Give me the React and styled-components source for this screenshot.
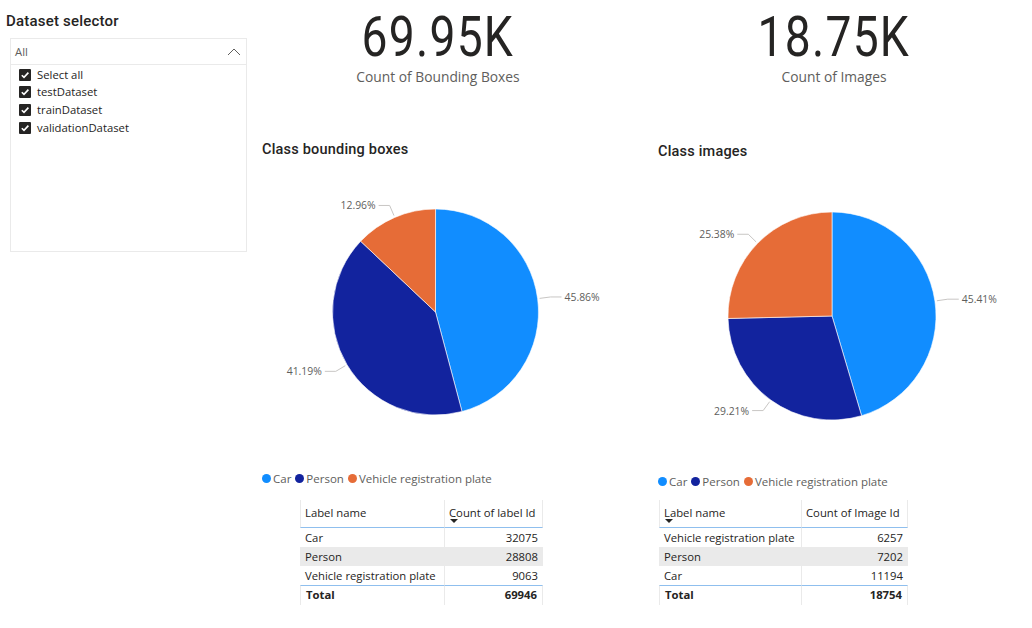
import React from "react";
import styled, { createGlobalStyle } from "styled-components";

const GlobalStyle = createGlobalStyle`
  html, body {
    margin: 0;
    padding: 0;
    background: #fff;
    font-family: "Open Sans", "Noto Sans", sans-serif;
  }
`;

const COLORS = {
  car: "#118DFF",
  person: "#12239E",
  plate: "#E66C37",
};

const Page = styled.div`
  width: 1032px;
  height: 628px;
  display: grid;
  grid-template-columns: 255px 396px 381px;
  overflow: hidden;
`;

const SlicerColumn = styled.div`
  display: flex;
  flex-direction: column;
  padding-top: 11px;
`;

const SlicerTitle = styled.div`
  font-family: Roboto, "DejaVu Sans", sans-serif;
  font-size: 15px;
  font-weight: 500;
  color: #252423;
  line-height: 20px;
  padding-left: 6px;
  letter-spacing: 0.2px;
`;

const SlicerBox = styled.div`
  margin: 7px 0 0 10px;
  width: 237px;
  height: 214px;
  box-sizing: border-box;
  border: 1px solid #eaeaea;
`;

const SlicerHeader = styled.div`
  height: 25px;
  display: flex;
  align-items: center;
  justify-content: space-between;
  padding: 0 5px 0 4px;
  border-bottom: 1px solid #eaeaea;
  font-size: 11.3px;
  color: #605e5c;
`;

const SlicerList = styled.div`
  display: flex;
  flex-direction: column;
  padding: 1px 0 0 8px;
`;

const SlicerItem = styled.div`
  display: flex;
  align-items: center;
  gap: 6px;
  height: 17.6px;
  line-height: 16px;
  font-size: 11.3px;
  color: #252423;
  flex-shrink: 0;
`;

const CheckBox = styled.span`
  width: 12px;
  height: 12px;
  border-radius: 1px;
  background: #252423;
  display: flex;
  align-items: center;
  justify-content: center;
`;

const Column = styled.div`
  display: flex;
  flex-direction: column;
`;

const Kpi = styled.div`
  width: 366px;
  height: 100px;
  display: flex;
  flex-direction: column;
  align-items: center;
  padding-top: ${(p) => p.$top}px;
  box-sizing: border-box;
`;

const KpiValue = styled.div`
  font-family: Roboto, "DejaVu Sans", sans-serif;
  font-size: 55px;
  line-height: 56px;
  color: #252423;
  letter-spacing: 1.5px;
  transform: scaleX(0.84);
`;

const KpiLabel = styled.div`
  font-size: 13.8px;
  line-height: 18px;
  color: #605e5c;
  margin-top: 3px;
`;

const ChartTitle = styled.div`
  font-family: Roboto, "DejaVu Sans", sans-serif;
  font-size: 14.5px;
  font-weight: 500;
  line-height: 20px;
  color: #252423;
  padding-left: 7px;
  margin-top: ${(p) => p.$top}px;
  letter-spacing: 0.2px;
`;

const PieSvg = styled.svg`
  display: block;
  width: 366px;
  height: 305px;
`;

const Legend = styled.div`
  display: flex;
  align-items: center;
  gap: 4px;
  padding-left: 7px;
  margin-top: ${(p) => p.$top}px;
  height: 16px;
  font-size: 11.5px;
  color: #605e5c;
`;

const LegendItem = styled.span`
  display: flex;
  align-items: center;
  gap: 2px;
`;

const Dot = styled.span`
  width: 9px;
  height: 9px;
  border-radius: 50%;
  background: ${(p) => p.$color};
`;

const Table = styled.div`
  margin-left: ${(p) => p.$left}px;
  margin-top: ${(p) => p.$top}px;
  width: ${(p) => p.$width}px;
  display: grid;
  grid-template-columns: ${(p) => p.$split}px 1fr;
  font-size: 11.3px;
  color: #252423;
`;

const HeadCell = styled.div`
  height: 28px;
  box-sizing: border-box;
  padding: 5px 5px 0 4px;
  border-bottom: 1px solid #8fbfee;
  border-left: 1px solid #eaeaea;
  border-right: ${(p) => (p.$last ? "1px solid #eaeaea" : "none")};
  position: relative;
  white-space: nowrap;
`;

const SortArrow = styled.span`
  position: absolute;
  left: 5px;
  top: 19px;
  width: 0;
  height: 0;
  border-left: 4px solid transparent;
  border-right: 4px solid transparent;
  border-top: 4px solid #252423;
`;

const Cell = styled.div`
  height: 19px;
  line-height: 19px;
  padding: 0 5px;
  background: ${(p) => (p.$shade ? "#eaeaea" : "transparent")};
  text-align: ${(p) => (p.$num ? "right" : "left")};
  border-left: ${(p) => (p.$num ? "1px solid #eaeaea" : "none")};
  white-space: nowrap;
`;

const TotalCell = styled.div`
  height: 19px;
  line-height: 18px;
  padding: 0 5px;
  font-weight: 700;
  border-top: 1px solid #8fbfee;
  border-left: 1px solid #eaeaea;
  border-right: ${(p) => (p.$last ? "1px solid #eaeaea" : "none")};
  text-align: ${(p) => (p.$num ? "right" : "left")};
`;

function point(cx, cy, r, t) {
  const a = t * Math.PI * 2;
  return [cx + r * Math.sin(a), cy - r * Math.cos(a)];
}

function slicePath(cx, cy, r, t0, t1) {
  const [x0, y0] = point(cx, cy, r, t0);
  const [x1, y1] = point(cx, cy, r, t1);
  const large = t1 - t0 > 0.5 ? 1 : 0;
  return `M${cx},${cy} L${x0},${y0} A${r},${r} 0 ${large} 1 ${x1},${y1} Z`;
}

function Pie({ cx, cy, r, slices }) {
  let t = 0;
  const parts = slices.map((s) => {
    const t0 = t;
    const t1 = t + s.value / 100;
    t = t1;
    return { ...s, t0, t1, mid: (t0 + t1) / 2 };
  });
  return (
    <PieSvg viewBox="0 0 366 305">
      {parts.map((p) => (
        <path
          key={p.name}
          d={slicePath(cx, cy, r, p.t0, p.t1)}
          fill={p.color}
          stroke="#fff"
          strokeWidth="0.6"
        />
      ))}
      {parts.map((p) => {
        const [ax, ay] = point(cx, cy, r + 2, p.mid);
        const [bx, by] = point(cx, cy, r + 13, p.mid);
        const right = Math.sin(p.mid * Math.PI * 2) > 0;
        const ex = right ? bx + 11 : bx - 11;
        return (
          <g key={p.name + "-lbl"}>
            <polyline
              points={`${ax},${ay} ${bx},${by} ${ex},${by}`}
              fill="none"
              stroke="#c8c6c4"
              strokeWidth="1"
            />
            <text
              x={right ? ex + 3 : ex - 3}
              y={by + 4}
              textAnchor={right ? "start" : "end"}
              fontFamily="Open Sans, Noto Sans, sans-serif"
              fontSize="10.4"
              fill="#605e5c"
            >
              {p.value.toFixed(2)}%
            </text>
          </g>
        );
      })}
    </PieSvg>
  );
}

const Check = () => (
  <svg width="10" height="10" viewBox="0 0 10 10">
    <polyline points="1.8,5.2 4,7.4 8.4,2.6" fill="none" stroke="#fff" strokeWidth="1.6" />
  </svg>
);

const ChevronUp = () => (
  <svg width="14" height="9" viewBox="0 0 14 9">
    <polyline points="1,8 7,2 13,8" fill="none" stroke="#605e5c" strokeWidth="1" />
  </svg>
);

function Legends({ top }) {
  return (
    <Legend $top={top}>
      <LegendItem>
        <Dot $color={COLORS.car} />
        Car
      </LegendItem>
      <LegendItem>
        <Dot $color={COLORS.person} />
        Person
      </LegendItem>
      <LegendItem>
        <Dot $color={COLORS.plate} />
        Vehicle registration plate
      </LegendItem>
    </Legend>
  );
}

function DataTable({ left, top, width, split, valueHead, sortOn, rows, total }) {
  return (
    <Table $left={left} $top={top} $width={width} $split={split}>
      <HeadCell>
        Label name
        {sortOn === 0 && <SortArrow />}
      </HeadCell>
      <HeadCell $last>
        {valueHead}
        {sortOn === 1 && <SortArrow />}
      </HeadCell>
      {rows.map((r, i) => (
        <React.Fragment key={r[0]}>
          <Cell $shade={i === 1}>{r[0]}</Cell>
          <Cell $shade={i === 1} $num>
            {r[1]}
          </Cell>
        </React.Fragment>
      ))}
      <TotalCell>Total</TotalCell>
      <TotalCell $num $last>
        {total}
      </TotalCell>
    </Table>
  );
}

const datasets = ["Select all", "testDataset", "trainDataset", "validationDataset"];

export default function App() {
  return (
    <>
      <GlobalStyle />
      <Page>
        <SlicerColumn>
          <SlicerTitle>Dataset selector</SlicerTitle>
          <SlicerBox>
            <SlicerHeader>
              <span>All</span>
              <ChevronUp />
            </SlicerHeader>
            <SlicerList>
              {datasets.map((d) => (
                <SlicerItem key={d}>
                  <CheckBox>
                    <Check />
                  </CheckBox>
                  {d}
                </SlicerItem>
              ))}
            </SlicerList>
          </SlicerBox>
        </SlicerColumn>

        <Column>
          <Kpi $top={9}>
            <KpiValue>69.95K</KpiValue>
            <KpiLabel>Count of Bounding Boxes</KpiLabel>
          </Kpi>
          <ChartTitle $top={40}>Class bounding boxes</ChartTitle>
          <Pie
            cx={180.5}
            cy={152}
            r={103}
            slices={[
              { name: "Car", value: 45.86, color: COLORS.car },
              { name: "Person", value: 41.19, color: COLORS.person },
              { name: "Plate", value: 12.96, color: COLORS.plate },
            ]}
          />
          <Legends top={5} />
          <DataTable
            left={45}
            top={14}
            width={243}
            split={144}
            valueHead="Count of label Id"
            sortOn={1}
            rows={[
              ["Car", "32075"],
              ["Person", "28808"],
              ["Vehicle registration plate", "9063"],
            ]}
            total="69946"
          />
        </Column>

        <Column>
          <Kpi $top={9}>
            <KpiValue>18.75K</KpiValue>
            <KpiLabel>Count of Images</KpiLabel>
          </Kpi>
          <ChartTitle $top={42}>Class images</ChartTitle>
          <Pie
            cx={181}
            cy={154}
            r={104}
            slices={[
              { name: "Car", value: 45.41, color: COLORS.car },
              { name: "Person", value: 29.21, color: COLORS.person },
              { name: "Plate", value: 25.38, color: COLORS.plate },
            ]}
          />
          <Legends top={6} />
          <DataTable
            left={8}
            top={11}
            width={249}
            split={142}
            valueHead="Count of Image Id"
            sortOn={0}
            rows={[
              ["Vehicle registration plate", "6257"],
              ["Person", "7202"],
              ["Car", "11194"],
            ]}
            total="18754"
          />
        </Column>
      </Page>
    </>
  );
}
